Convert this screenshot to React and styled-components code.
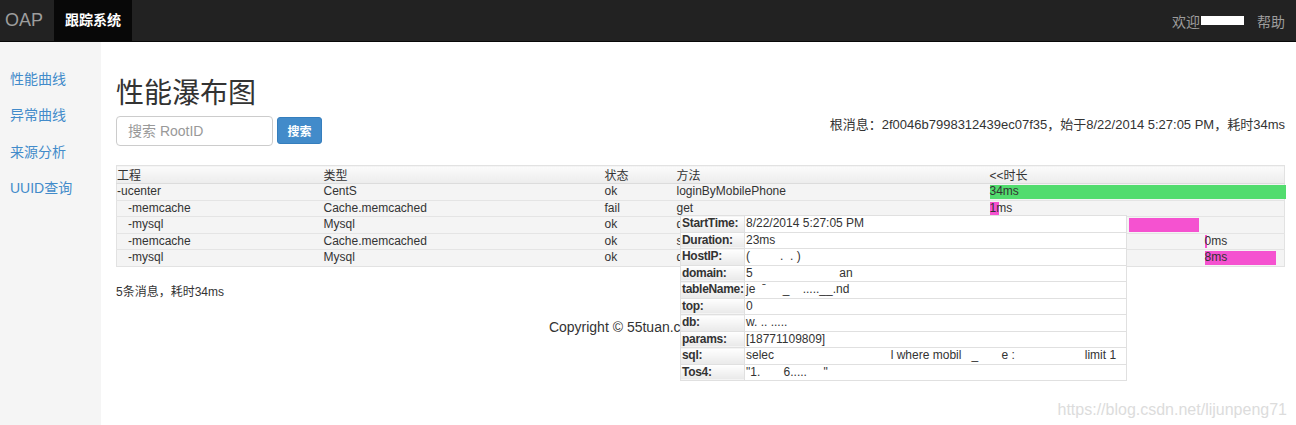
import React from 'react';
import styled, { createGlobalStyle } from 'styled-components';

const FONT = '"Liberation Sans", "Noto Sans CJK SC", sans-serif';

const GlobalStyle = createGlobalStyle`
  body {
    margin: 0;
    font-family: ${FONT};
    color: #333;
    background: #fff;
  }
`;

//Style
const Page = styled.div`
  position: relative;
  min-height: 425px;
  overflow: hidden;
`;
const Navbar = styled.nav`
  height: 41px;
  background: #222;
  border-bottom: 1px solid #080808;
  display: flex;
  align-items: stretch;
  padding: 0 11px 0 5px;
`;
const Brand = styled.span`
  color: #9d9d9d;
  font-size: 18px;
  line-height: 41px;
  margin-right: 11px;
`;
const NavTab = styled.span`
  background: ${props => (props.active ? '#080808' : 'transparent')};
  color: ${props => (props.active ? '#fff' : '#9d9d9d')};
  font-weight: ${props => (props.active ? 'bold' : 'normal')};
  font-size: 14px;
  line-height: 41px;
  padding: 0 11px;
`;
const NavRight = styled.div`
  margin-left: auto;
  display: flex;
  align-items: center;
  color: #9d9d9d;
  font-size: 14px;
  gap: 13px;
`;
const Welcome = styled.span`
  display: flex;
  align-items: center;
`;
const Redacted = styled.span`
  display: inline-block;
  width: 43px;
  height: 9px;
  background: #fff;
  margin-left: 1px;
`;
const Body = styled.div`
  display: flex;
  min-height: 383px;
`;
const Sidebar = styled.aside`
  width: 101px;
  background: #f5f5f5;
  padding-top: 27px;
  display: flex;
  flex-direction: column;
  gap: 16.3px;
`;
const SideLink = styled.a`
  color: #428bca;
  font-size: 14px;
  line-height: 20px;
  padding-left: 10px;
  text-decoration: none;
`;
const Main = styled.main`
  flex: 1;
  padding: 0 11px 0 15px;
`;
const Title = styled.h1`
  font-size: 28px;
  font-weight: 400;
  line-height: 33px;
  margin: 35px 0 6px;
  color: #333;
`;
const SearchRow = styled.div`
  display: flex;
  align-items: flex-start;
  gap: 4px;
`;
const SearchInput = styled.input`
  box-sizing: border-box;
  width: 157px;
  height: 30px;
  border: 1px solid #ccc;
  border-radius: 4px;
  padding: 0 11px;
  font-family: ${FONT};
  font-size: 14px;
  color: #555;
  &::placeholder {
    color: #999;
  }
`;
const SearchButton = styled.button`
  width: 45px;
  height: 27px;
  margin-top: 1px;
  background: #428bca;
  border: 1px solid #357ebd;
  border-radius: 3px;
  color: #fff;
  font-weight: bold;
  font-size: 12px;
  font-family: ${FONT};
`;
const RootInfo = styled.div`
  margin-left: auto;
  font-size: 13px;
  line-height: 16px;
  margin-top: 1px;
  color: #333;
`;
const TableWrap = styled.div`
  position: relative;
  margin-top: 19px;
`;
const Table = styled.table`
  width: 100%;
  border-collapse: collapse;
  border: 1px solid #e2e2e2;
  font-size: 12px;
  table-layout: fixed;
  th {
    text-align: left;
    font-weight: normal;
    height: 15px;
    padding: 0;
    background: linear-gradient(#fbfbfb, #ececec);
    border-bottom: 1px solid #dcdcdc;
  }
  td {
    height: 15.5px;
    padding: 0;
    line-height: 15px;
    background: #f4f4f4;
    border-top: 1px solid #e4e4e4;
    white-space: nowrap;
    overflow: visible;
  }
`;
const NameCell = styled.td`
  padding-left: ${props => props.depth * 11}px !important;
`;
const BarCell = styled.td`
  position: relative;
`;
const Bar = styled.span`
  position: absolute;
  top: 1px;
  bottom: 1px;
  background: ${props => (props.root ? '#52dc6e' : '#f552d0')};
`;
const BarLabel = styled.span`
  position: relative;
  color: #333;
`;
const Tooltip = styled.table`
  position: absolute;
  left: 564px;
  top: 50px;
  width: 447px;
  border-collapse: collapse;
  table-layout: fixed;
  background: #fff;
  font-size: 12px;
  td {
    height: 15.5px;
    line-height: 15px;
    padding: 0 0 0 1px;
    border: 1px solid #e0e0e0;
    white-space: pre;
    overflow: hidden;
  }
`;
const TipLabel = styled.td`
  font-weight: bold;
  letter-spacing: -0.3px;
  background: linear-gradient(#ffffff, #e9e9e9);
`;
const Summary = styled.p`
  font-size: 12px;
  margin: 15px 0 0;
`;
const Footer = styled.footer`
  text-align: center;
  font-size: 14px;
  margin-top: 20px;
  padding-right: 26px;
  color: #333;
`;
const Watermark = styled.span`
  position: absolute;
  right: 9px;
  bottom: 6px;
  font-size: 16px;
  color: #dcdcdc;
`;

const sp = n => ' '.repeat(n);

const rows = [
  { name: 'ucenter', depth: 0, type: 'CentS', status: 'ok', method: 'loginByMobilePhone', start: 0, width: 296, label: '34ms', root: true },
  { name: 'memcache', depth: 1, type: 'Cache.memcached', status: 'fail', method: 'get', start: 0, width: 9, label: '1ms' },
  { name: 'mysql', depth: 1, type: 'Mysql', status: 'ok', method: 'queryByMobile', start: 139, width: 70, label: '' },
  { name: 'memcache', depth: 1, type: 'Cache.memcached', status: 'ok', method: 'set', start: 215, width: 2, label: '0ms' },
  { name: 'mysql', depth: 1, type: 'Mysql', status: 'ok', method: 'queryById', start: 215, width: 71, label: '8ms' }
];

const details = [
  ['StartTime:', '8/22/2014 5:27:05 PM'],
  ['Duration:', '23ms'],
  ['HostIP:', `(${sp(9)}.  . )`],
  ['domain:', `5${sp(26)}an`],
  ['tableName:', `je  ˉ${sp(5)}_${sp(4)}.....__.nd`],
  ['top:', '0'],
  ['db:', 'w. .. .....'],
  ['params:', '[18771109809]'],
  ['sql:', `selec${sp(35)}l where mobil${sp(3)}_${sp(7)}e :${sp(21)}limit 1`],
  ['Tos4:', `"1.${sp(7)}6.....${sp(5)}"`]
];

const App = () => (
  <Page>
    <GlobalStyle />
    <Navbar>
      <Brand>OAP</Brand>
      <NavTab active>跟踪系统</NavTab>
      <NavRight>
        <Welcome>
          欢迎<Redacted />
        </Welcome>
        <span>帮助</span>
      </NavRight>
    </Navbar>
    <Body>
      <Sidebar>
        <SideLink href='#'>性能曲线</SideLink>
        <SideLink href='#'>异常曲线</SideLink>
        <SideLink href='#'>来源分析</SideLink>
        <SideLink href='#'>UUID查询</SideLink>
      </Sidebar>
      <Main>
        <Title>性能瀑布图</Title>
        <SearchRow>
          <SearchInput placeholder='搜索 RootID' />
          <SearchButton>搜索</SearchButton>
          <RootInfo>
            根消息：2f0046b7998312439ec07f35，始于8/22/2014 5:27:05 PM，耗时34ms
          </RootInfo>
        </SearchRow>
        <TableWrap>
          <Table>
            <colgroup>
              <col style={{ width: 207 }} />
              <col style={{ width: 281 }} />
              <col style={{ width: 72 }} />
              <col style={{ width: 313 }} />
              <col />
            </colgroup>
            <thead>
              <tr>
                <th>工程</th>
                <th>类型</th>
                <th>状态</th>
                <th>方法</th>
                <th>&lt;&lt;时长</th>
              </tr>
            </thead>
            <tbody>
              {rows.map((r, i) => (
                <tr key={i}>
                  <NameCell depth={r.depth}>-{r.name}</NameCell>
                  <td>{r.type}</td>
                  <td>{r.status}</td>
                  <td>{r.method}</td>
                  <BarCell>
                    <Bar root={r.root} style={{ left: r.start, width: r.width }} />
                    {r.label && (
                      <BarLabel style={{ marginLeft: r.start }}>{r.label}</BarLabel>
                    )}
                  </BarCell>
                </tr>
              ))}
            </tbody>
          </Table>
          <Tooltip>
            <colgroup>
              <col style={{ width: 64 }} />
              <col />
            </colgroup>
            <tbody>
              {details.map(([k, v]) => (
                <tr key={k}>
                  <TipLabel>{k}</TipLabel>
                  <td>{v}</td>
                </tr>
              ))}
            </tbody>
          </Tooltip>
        </TableWrap>
        <Summary>5条消息，耗时34ms</Summary>
        <Footer>Copyright © 55tuan.com All Rights Reserved</Footer>
      </Main>
    </Body>
    <Watermark>https://blog.csdn.net/lijunpeng71</Watermark>
  </Page>
);

export default App;
